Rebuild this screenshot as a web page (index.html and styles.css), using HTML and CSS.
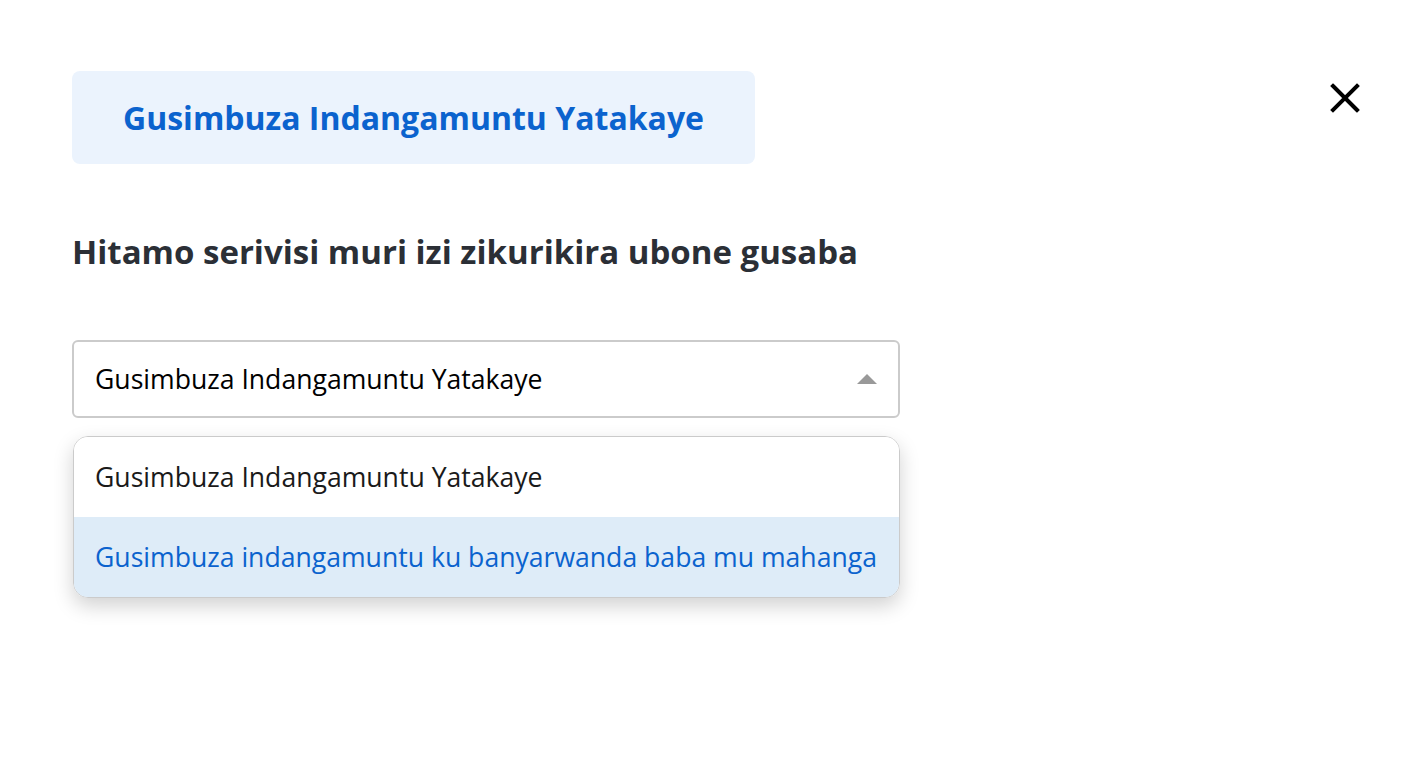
FILE: index.html
```html
<!DOCTYPE html>
<html lang="rw">
<head>
<meta charset="utf-8">
<title>Gusimbuza Indangamuntu</title>
<link rel="stylesheet" href="styles.css">
</head>
<body>
<div class="page">
  <div class="header">
    <div class="title-box">Gusimbuza Indangamuntu Yatakaye</div>
    <button class="close" aria-label="Funga">
      <svg width="30" height="30" viewBox="0 0 30 30"><path d="M3 3 L27 27 M27 3 L3 27" stroke="#000" stroke-width="4" stroke-linecap="square" fill="none"/></svg>
    </button>
  </div>
  <h2 class="subtitle">Hitamo serivisi muri izi zikurikira ubone gusaba</h2>
  <div class="select-wrap">
    <div class="select">
      <span class="select-value">Gusimbuza Indangamuntu Yatakaye</span>
      <span class="caret"></span>
    </div>
    <ul class="menu">
      <li class="option">Gusimbuza Indangamuntu Yatakaye</li>
      <li class="option active">Gusimbuza indangamuntu ku banyarwanda baba mu mahanga</li>
    </ul>
  </div>
</div>
</body>
</html>
```
FILE: styles.css
```css
* { box-sizing: border-box; }
html, body { margin: 0; padding: 0; background: #fff; }
body { font-family: "Open Sans", "Noto Sans", sans-serif; color: #000; min-height: 760px; }
.page { padding: 71px 66px 0 72px; }
.header { display: flex; justify-content: space-between; align-items: flex-start; }
.title-box {
  width: 683px; height: 93px;
  background: #ebf3fd;
  border-radius: 8px;
  display: flex; align-items: center; justify-content: center;
  color: #0b63ce;
  font-weight: 700;
  font-size: 32px;
  letter-spacing: 0;
}
.close { background: none; border: 0; padding: 0; margin-top: 12px; width: 30px; height: 30px; cursor: pointer; }
.close svg { display: block; }
.subtitle {
  margin: 66px 0 0 0;
  font-size: 33px; font-weight: 700; color: #2b2f36;
  line-height: 44px;
}
.select-wrap { width: 828px; margin-top: 66px; }
.select {
  height: 78px;
  border: 2px solid #cbcbcb;
  border-radius: 6px;
  display: flex; align-items: center; justify-content: space-between;
  padding: 0 21px 0 21px;
  font-size: 26.6px;
}
.caret {
  width: 0; height: 0;
  border-left: 10px solid transparent;
  border-right: 10px solid transparent;
  border-bottom: 10px solid #999;
}
.menu {
  list-style: none; margin: 18px 0 0 1px; padding: 0;
  border: 1.5px solid #cbcbcb;
  border-radius: 15px;
  overflow: hidden;
  box-shadow: 0 8px 20px rgba(0,0,0,0.18);
}
.option {
  height: 80px;
  display: flex; align-items: center;
  padding: 0 21px;
  font-size: 26.6px;
  color: #1a1a1a;
  background: #fff;
}
.option.active { background: #deecf8; color: #0b63ce; }
```
